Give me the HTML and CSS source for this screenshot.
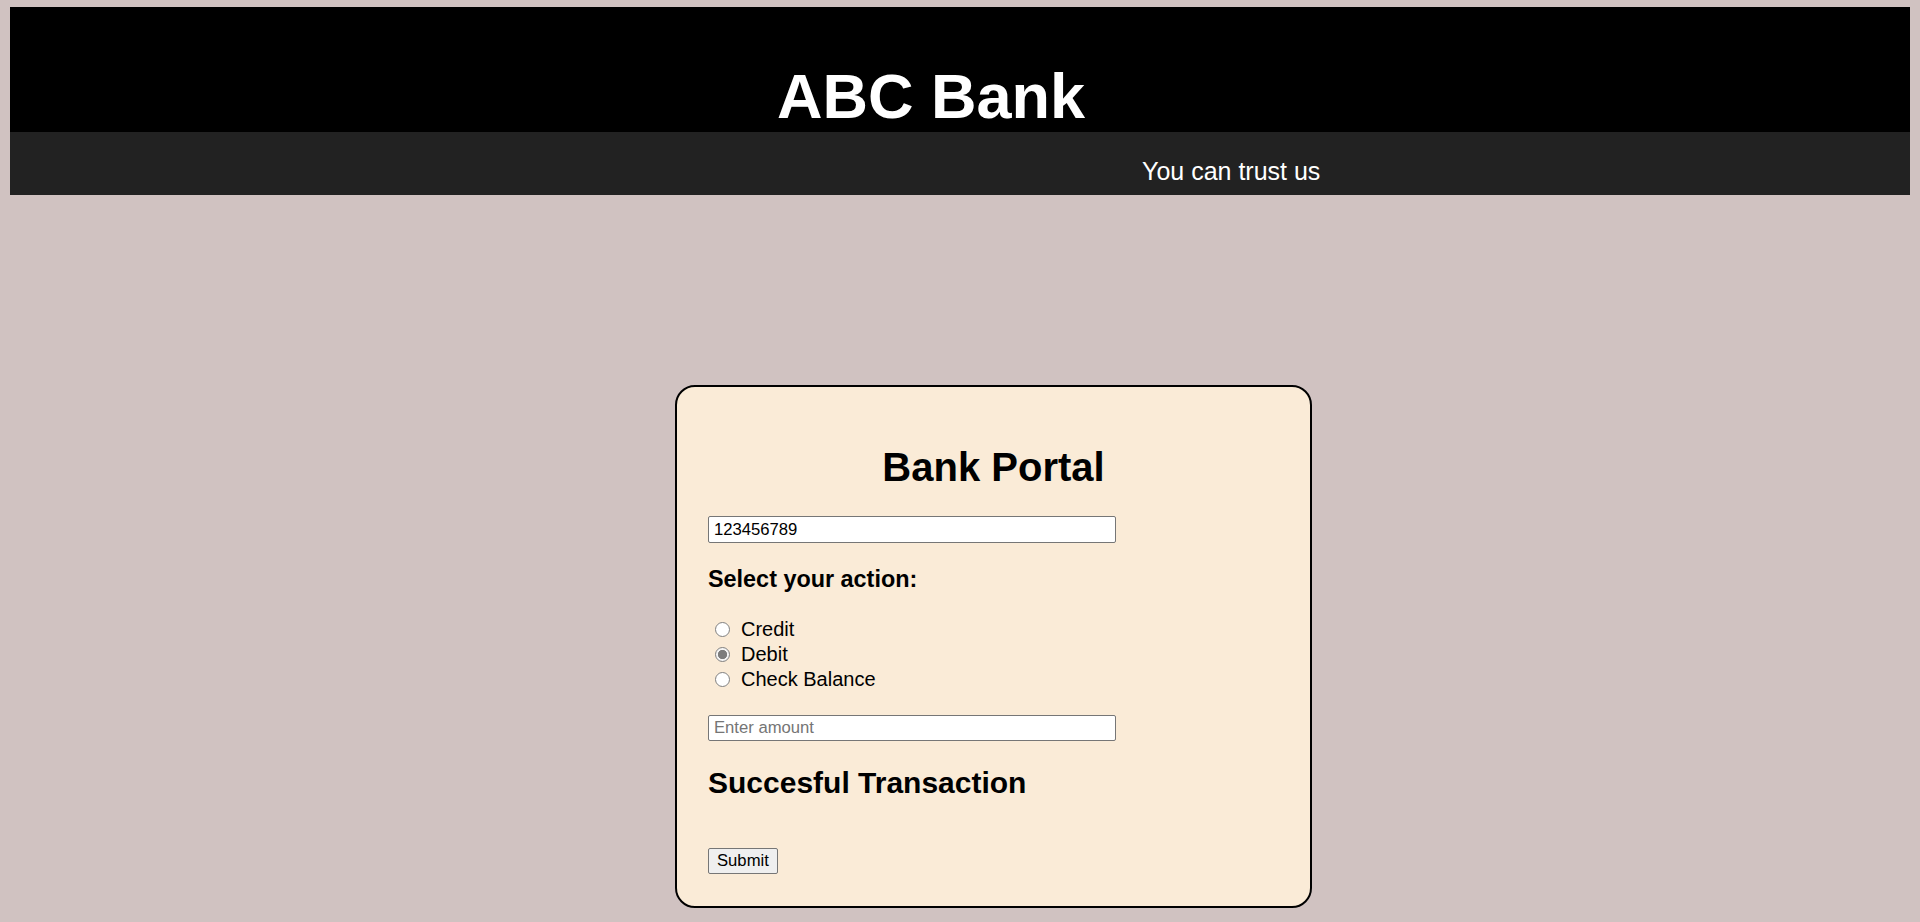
FILE: index.html
```html
<!DOCTYPE html>
<html lang="en">
<head>
<meta charset="utf-8">
<title>ABC Bank</title>
<link rel="stylesheet" href="styles.css">
</head>
<body>
  <header class="site-header">
    <div class="brand-bar">
      <h1 class="brand-title">ABC Bank</h1>
    </div>
    <div class="tagline-bar">
      <p class="tagline">You can trust us</p>
    </div>
  </header>

  <main class="main">
    <form class="portal-card">
      <h1 class="portal-title">Bank Portal</h1>
      <input class="text-input account-input" type="text" value="123456789">
      <h3 class="action-title">Select your action:</h3>
      <div class="radio-group">
        <div class="radio-row">
          <input class="radio" type="radio" name="action" id="credit">
          <label class="radio-label" for="credit">Credit</label>
        </div>
        <div class="radio-row">
          <input class="radio" type="radio" name="action" id="debit" checked>
          <label class="radio-label" for="debit">Debit</label>
        </div>
        <div class="radio-row">
          <input class="radio" type="radio" name="action" id="balance">
          <label class="radio-label" for="balance">Check Balance</label>
        </div>
      </div>
      <input class="text-input amount-input" type="text" placeholder="Enter amount">
      <h2 class="status">Succesful Transaction</h2>
      <button class="submit-btn" type="button">Submit</button>
    </form>
  </main>
</body>
</html>
```

FILE: styles.css
```css
html, body {
  margin: 0;
  padding: 0;
}

body {
  background: #d0c2c1;
  font-family: "Liberation Sans", Arial, sans-serif;
  padding: 7px 10px 0;
  color: #000;
}

.site-header {
  display: flex;
  flex-direction: column;
}

.brand-bar {
  background: #000;
  height: 125px;
  box-sizing: border-box;
  padding: 54px 0 0 767px;
}

.brand-title {
  margin: 0;
  color: #fff;
  font-size: 63px;
  line-height: 70px;
  font-weight: bold;
}

.tagline-bar {
  background: #222222;
  height: 63px;
  box-sizing: border-box;
  padding: 25px 0 0 1132px;
}

.tagline {
  margin: 0;
  color: #fff;
  font-size: 25px;
  line-height: 28px;
}

.main {
  display: flex;
  padding: 190px 0 0 665px;
}

.portal-card {
  width: 637px;
  box-sizing: border-box;
  background: #faebd7;
  border: 2px solid #000;
  border-radius: 20px;
  padding: 0 31px 32px;
  display: flex;
  flex-direction: column;
  align-items: flex-start;
}

.portal-title {
  align-self: stretch;
  text-align: center;
  margin: 57px 0 0;
  font-size: 40px;
  line-height: 46px;
  font-weight: bold;
}

.text-input {
  width: 408px;
  height: 27px;
  box-sizing: border-box;
  margin: 26px 0 0;
  padding: 0 5px;
  border: 1px solid #767676;
  border-radius: 2px;
  background: #fff;
  font-family: "Liberation Sans", Arial, sans-serif;
  font-size: 16.67px;
  color: #000;
  outline: none;
}

.text-input::placeholder {
  color: #757575;
}

.amount-input {
  height: 26px;
  margin-top: 23px;
}

.action-title {
  margin: 23px 0 0;
  font-size: 23.4px;
  line-height: 27px;
  font-weight: bold;
}

.radio-group {
  margin-top: 24px;
  display: flex;
  flex-direction: column;
}

.radio-row {
  display: flex;
  align-items: center;
  height: 25px;
}

.radio {
  appearance: none;
  -webkit-appearance: none;
  width: 15px;
  height: 15px;
  margin: 0 0 0 7px;
  border: 1px solid #808080;
  border-radius: 50%;
  background: #fff;
  box-sizing: border-box;
}

.radio:checked {
  background: radial-gradient(circle, #7d7d7d 0 4.3px, #f4f4f4 5px);
}

.radio-label {
  margin-left: 11px;
  font-size: 20px;
  line-height: 25px;
}

.status {
  margin: 25px 0 0;
  font-size: 30px;
  line-height: 34px;
  font-weight: bold;
}

.submit-btn {
  margin-top: 48px;
  height: 26px;
  padding: 0 8px;
  border: 1px solid #767676;
  border-radius: 2px;
  background: #efefef;
  font-family: "Liberation Sans", Arial, sans-serif;
  font-size: 16.67px;
  color: #000;
}
```
